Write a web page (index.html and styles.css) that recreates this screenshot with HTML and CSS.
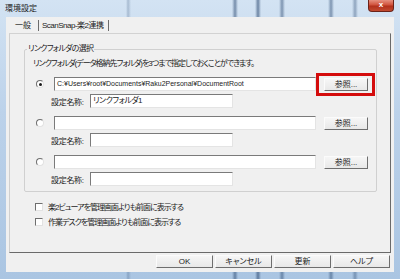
FILE: index.html
```html
<!DOCTYPE html>
<html>
<head>
  <meta charset="UTF-8">
  <title>環境設定</title>
  <link rel="stylesheet" href="styles.css">
</head>
<body>
  <div class="window">
    <div class="titlebar">
      <span class="title">環境設定</span>
      <span class="close">x</span>
    </div>

    <div class="frame">
      <div class="client">
        <!-- タブ -->
        <div class="tabs">
          <div class="tab active">一般</div>
          <div class="tab">ScanSnap-楽2連携</div>
        </div>

        <div class="panel">
          <fieldset class="group">
            <legend>リンクフォルダの選択</legend>
            <p class="desc">リンクフォルダ(データ格納先フォルダ)を3つまで指定しておくことができます。</p>

            <div class="entry">
              <div class="path-row">
                <span class="radio checked"></span>
                <span class="field path">C:¥Users¥root¥Documents¥Raku2Personal¥DocumentRoot</span>
                <span class="btn-wrap">
                  <button class="btn browse">参照...</button>
                  <span class="highlight"></span>
                </span>
              </div>
              <div class="name-row">
                <span class="name-label">設定名称:</span>
                <span class="field name">リンクフォルダ1</span>
              </div>
            </div>

            <div class="entry">
              <div class="path-row">
                <span class="radio"></span>
                <span class="field path"></span>
                <span class="btn-wrap">
                  <button class="btn browse">参照...</button>
                </span>
              </div>
              <div class="name-row">
                <span class="name-label">設定名称:</span>
                <span class="field name"></span>
              </div>
            </div>

            <div class="entry">
              <div class="path-row">
                <span class="radio"></span>
                <span class="field path"></span>
                <span class="btn-wrap">
                  <button class="btn browse">参照...</button>
                </span>
              </div>
              <div class="name-row">
                <span class="name-label">設定名称:</span>
                <span class="field name"></span>
              </div>
            </div>
          </fieldset>

          <div class="checks">
            <div class="check"><span class="box"></span>楽2ビューアを管理画面よりも前面に表示する</div>
            <div class="check"><span class="box"></span>作業デスクを管理画面よりも前面に表示する</div>
          </div>
        </div>

        <!-- ボタン -->
        <div class="actions">
          <button class="btn action">OK</button>
          <button class="btn action">キャンセル</button>
          <button class="btn action">更新</button>
          <button class="btn action">ヘルプ</button>
        </div>
      </div>
    </div>
  </div>
</body>
</html>
```

FILE: styles.css
```css
html, body {
  margin: 0;
  padding: 0;
}

body {
  width: 400px;
  height: 279px;
  overflow: hidden;
  font-family: "Liberation Sans", "Noto Sans CJK JP", sans-serif;
  font-size: 8px;
  color: #1c1c1c;
  font-feature-settings: "palt";
}

.window {
  width: 400px;
  height: 279px;
  display: flex;
  flex-direction: column;
  background:
    linear-gradient(to right,
      rgba(40, 70, 110, 0) 0,
      rgba(40, 70, 110, 0) 126px,
      rgba(40, 70, 110, 0.25) 128px,
      rgba(40, 70, 110, 0) 131px,
      rgba(40, 70, 110, 0) 232px,
      rgba(40, 70, 110, 0.55) 235px,
      rgba(40, 70, 110, 0) 238px,
      rgba(40, 70, 110, 0) 255px,
      rgba(40, 70, 110, 0.6) 258px,
      rgba(40, 70, 110, 0) 261px,
      rgba(40, 70, 110, 0) 279px,
      rgba(40, 70, 110, 0.5) 282px,
      rgba(40, 70, 110, 0) 285px,
      rgba(40, 70, 110, 0) 328px,
      rgba(40, 70, 110, 0.5) 331px,
      rgba(40, 70, 110, 0) 334px,
      rgba(40, 70, 110, 0) 352px,
      rgba(40, 70, 110, 0.4) 355px,
      rgba(40, 70, 110, 0) 358px),
    linear-gradient(to bottom, #d3e3f3 0, #bcd2ea 40%, #aac5e2 100%);
}

/* タイトルバー */
.titlebar {
  height: 17px;
  display: flex;
  align-items: flex-start;
}

.title {
  padding: 3px 0 0 5px;
  line-height: 11px;
  font-size: 8px;
  color: #222;
}

.close {
  margin-left: auto;
  margin-right: 6px;
  width: 26px;
  height: 12px;
  box-sizing: border-box;
  border: 1px solid #6b2218;
  border-top: none;
  border-radius: 0 0 4px 4px;
  background: linear-gradient(to bottom, #e6907f 0, #d0523c 45%, #b2301c 55%, #c24a30 100%);
  color: #fff;
  font-weight: bold;
  font-size: 8px;
  line-height: 10px;
  text-align: center;
}

.frame {
  padding: 0 6px;
}

.client {
  height: 255px;
  background-color: #f0f0f0;
  display: flex;
  flex-direction: column;
}

/* タブ */
.tabs {
  height: 16px;
  display: flex;
  align-items: center;
  padding-left: 1px;
}

.tab {
  line-height: 11px;
  border-right: 1px solid #6c6c6c;
  white-space: nowrap;
}

.tab.active {
  width: 23px;
  padding-left: 8px;
}

.tab + .tab {
  padding: 0 4px 0 2px;
  margin-left: 1px;
  letter-spacing: -0.5px;
}

.panel {
  margin: 0 3px;
  height: 220px;
  box-sizing: border-box;
  border: 1px solid;
  border-color: #d2d2d2 #6a6a6a #6a6a6a #cfcfcf;
}

/* グループ */
.group {
  margin: 10px 0 0 14px;
  padding: 0 0 4px 0;
  width: 353px;
  height: 148px;
  box-sizing: border-box;
  border: 1px solid #d0d0d0;
  border-radius: 2px;
}

.group legend {
  margin-left: 2px;
  padding: 0 1px;
  line-height: 10px;
  letter-spacing: -0.7px;
}

.desc {
  margin: 5px 0 0 8px;
  line-height: 10px;
  white-space: nowrap;
  letter-spacing: -1px;
}

.entry {
  margin-top: 8px;
}

.path-row,
.name-row {
  display: flex;
  align-items: center;
  height: 14px;
}

.name-row {
  margin-top: 3px;
}

.radio {
  width: 6px;
  height: 6px;
  margin-left: 11px;
  border: 1px solid;
  border-color: #6e6e6e #e2e2e2 #e2e2e2 #6e6e6e;
  border-radius: 50%;
  background-color: #fff;
  display: flex;
  align-items: center;
  justify-content: center;
  flex-shrink: 0;
}

.radio.checked::after {
  content: "";
  width: 3px;
  height: 3px;
  border-radius: 50%;
  background-color: #1a1a1a;
}

.field {
  height: 14px;
  box-sizing: border-box;
  border: 1px solid;
  border-color: #7a7a7a #e4e4e4 #e4e4e4 #7a7a7a;
  background-color: #fff;
  padding: 0 2px;
  line-height: 12px;
  white-space: nowrap;
  overflow: hidden;
}

.path {
  width: 262px;
  margin-left: 10px;
  font-size: 7px;
}

.name-label {
  width: 39px;
  margin-left: 26px;
  letter-spacing: -0.3px;
}

.name {
  width: 143px;
  letter-spacing: -0.5px;
}

.btn-wrap {
  position: relative;
  margin-left: 8px;
  display: flex;
}

.btn {
  font-family: inherit;
  font-size: 8px;
  font-feature-settings: "palt";
  color: #1c1c1c;
  padding: 0;
  box-sizing: border-box;
  border: 1px solid;
  border-color: #fbfbfb #6e6e6e #6e6e6e #fbfbfb;
  background: linear-gradient(to bottom, #f6f6f6, #e8e8e8);
  line-height: 11px;
}

.browse {
  width: 44px;
  height: 13px;
}

/* 赤枠の注釈 */
.highlight {
  position: absolute;
  left: -8px;
  top: -5px;
  right: -7px;
  bottom: -5px;
  border: 3px solid #d40c0c;
}

/* チェックボックス */
.checks {
  margin: 7px 0 0 25px;
}

.check {
  display: flex;
  align-items: center;
  height: 15px;
  white-space: nowrap;
  letter-spacing: -1px;
}

.box {
  width: 6px;
  height: 6px;
  margin-right: 5px;
  border: 1px solid;
  border-color: #6e6e6e #e2e2e2 #e2e2e2 #6e6e6e;
  background-color: #fff;
}

/* 下部のボタン */
.actions {
  display: flex;
  justify-content: flex-end;
  gap: 2px;
  margin-top: 2px;
  padding-right: 4px;
}

.action {
  width: 57px;
  height: 13px;
}
```
